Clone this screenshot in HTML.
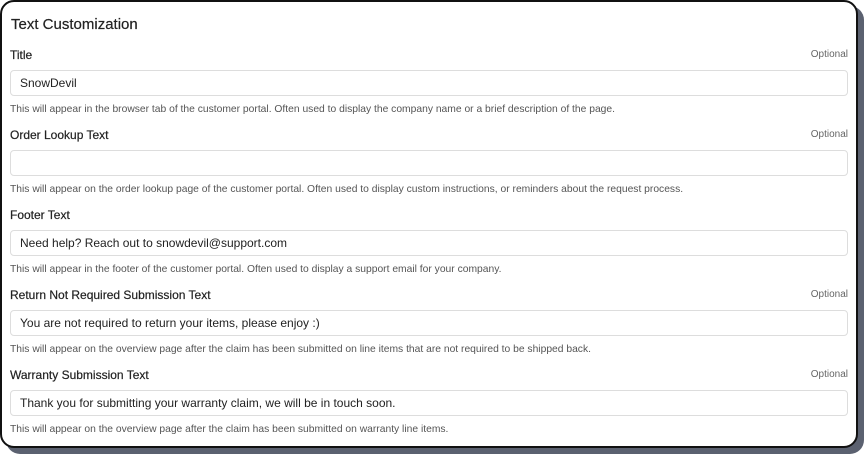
<!DOCTYPE html>
<html><head><style>
html,body{margin:0;padding:0;width:864px;height:454px;background:#fff;overflow:hidden}
body{font-family:"Liberation Sans",sans-serif;position:relative}
.shadow{position:absolute;left:6px;top:6px;width:858px;height:448px;background:#5b6170;border-radius:14px}
.card{position:absolute;left:0;top:0;width:854px;height:444px;background:#fff;border:2px solid #111;border-radius:14px}
h1{position:absolute;left:9px;top:14px;margin:0;font-size:15px;font-weight:normal;color:#222;-webkit-text-stroke:0.2px #222}
.sec{position:absolute;left:8px;width:838px}
.lbl{position:absolute;left:0;top:0;font-size:12px;color:#222;-webkit-text-stroke:0.2px #222}
.opt{position:absolute;right:0;top:1px;font-size:10px;color:#666}
.inp{position:absolute;left:0;top:22px;border:1px solid #ddd;border-radius:4px;font-size:12px;color:#222;line-height:24px;padding-left:9px;box-sizing:border-box;width:838px;height:26px}
.help{position:absolute;left:0;top:56px;font-size:10.3px;color:#555;white-space:nowrap}
</style></head><body>
<div class="shadow"></div>
<div class="card">
<h1>Text Customization</h1>
<div class="sec" style="top:46px"><div class="lbl">Title</div><div class="opt">Optional</div><div class="inp">SnowDevil</div><div class="help">This will appear in the browser tab of the customer portal. Often used to display the company name or a brief description of the page.</div></div>
<div class="sec" style="top:126px"><div class="lbl">Order Lookup Text</div><div class="opt">Optional</div><div class="inp"></div><div class="help">This will appear on the order lookup page of the customer portal. Often used to display custom instructions, or reminders about the request process.</div></div>
<div class="sec" style="top:206px"><div class="lbl">Footer Text</div><div class="inp">Need help? Reach out to snowdevil@support.com</div><div class="help">This will appear in the footer of the customer portal. Often used to display a support email for your company.</div></div>
<div class="sec" style="top:286px"><div class="lbl">Return Not Required Submission Text</div><div class="opt">Optional</div><div class="inp">You are not required to return your items, please enjoy :)</div><div class="help">This will appear on the overview page after the claim has been submitted on line items that are not required to be shipped back.</div></div>
<div class="sec" style="top:366px"><div class="lbl">Warranty Submission Text</div><div class="opt">Optional</div><div class="inp">Thank you for submitting your warranty claim, we will be in touch soon.</div><div class="help">This will appear on the overview page after the claim has been submitted on warranty line items.</div></div>
</div>
</body></html>
